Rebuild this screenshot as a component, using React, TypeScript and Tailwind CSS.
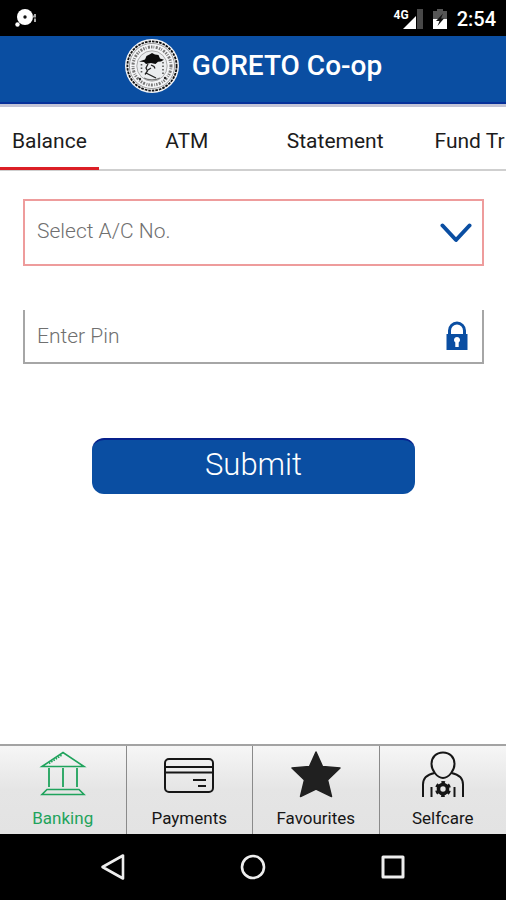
import { useState } from "react";
import type { ReactNode } from "react";

function Seal() {
  return (
    <svg viewBox="0 0 56 56" className="size-14 shrink-0" aria-hidden="true">
      <circle cx="28" cy="28" r="27" fill="#f4f5f7" />
      <circle cx="28" cy="28" r="24.6" fill="none" stroke="#111" strokeWidth="1.8" strokeDasharray="2.6 1" />
      <circle cx="28" cy="28" r="22.6" fill="none" stroke="#777" strokeWidth="0.7" />
      <circle cx="28" cy="28" r="19" fill="none" stroke="#777" strokeWidth="3" strokeDasharray="1.4 1.1 0.8 1.5 2 1.2" />
      <circle cx="28" cy="28" r="15.2" fill="#eceef0" stroke="#999" strokeWidth="0.8" />
      <path d="M15 23.500 21 21.500l1.500-3.500 3-1.500 2.500-1.500 3 1.500 3.500.5 1.500 3.500 4 1.200-3 1.800-3 .3-2.500 2.200-4.500-1-5 1-2-2Z" fill="#0c0c0c" />
      <path d="m24 26-2 4 1.500 3-2.500 3.500M27 27l3 1.500 1 2M22 35l4 2 6 3M24 32l3-2" fill="none" stroke="#222" strokeWidth="1.300" />
      <path d="M39 24v13M17.500 26v9" stroke="#555" strokeWidth="1.600" strokeDasharray="1.500 2" />
      <path d="M20 40c4 2.500 12 2.500 16 0" fill="none" stroke="#777" strokeWidth="1.200" />
      <circle cx="16" cy="41" r="1.200" fill="#222" />
      <circle cx="41" cy="40" r="1.200" fill="#222" />
    </svg>
  );
}

function StatusBar() {
  return (
    <div className="flex h-9 items-center justify-between bg-black pt-0.5 pr-2.5 pl-3.5 text-white">
      <svg viewBox="0 0 24 20" className="h-5 w-6" aria-hidden="true">
        <circle cx="11" cy="8" r="8" fill="#fff" />
        <circle cx="3.500" cy="15.500" r="2.200" fill="#fff" />
        <circle cx="11" cy="8" r="1.700" fill="#111" />
        <path d="M21 5v9M18.500 7.500h3" stroke="#aaa" strokeWidth="2" strokeDasharray="3.500 1" />
      </svg>
      <div className="flex items-center">
        <span className="-mr-2 self-start text-xs leading-3 font-bold">4G</span>
        <svg viewBox="0 0 22 20" className="h-5 w-[22px]" aria-hidden="true">
          <path d="M16 0h6v20h-6Z" fill="#484848" />
          <path d="M2 20 14 8v12Z" fill="#fff" />
          <path d="M14 8l1-1V20H14Z" fill="#fff" />
        </svg>
        <svg viewBox="0 0 14 20" className="mr-2.5 ml-2.5 h-5 w-3.5" aria-hidden="true">
          <path d="M4 0h6v2h4v8H0V2h4Z" fill="#555" />
          <path d="M0 10h14v10H0Z" fill="#fff" />
          <path d="M10 4.500 3 12h3.500L4.500 17 11 9.500H8Z" fill="#111" />
        </svg>
        <span className="text-xl leading-5 font-medium">2:54</span>
      </div>
    </div>
  );
}

const BankIcon = (
  <svg viewBox="0 0 48 48" className="size-12" fill="none" stroke="#1fa35c" strokeWidth="1.600" aria-hidden="true">
    <path d="M3 16.500 24 2.500l21 14Z" />
    <path d="M10 18v19M24 18v19M38 18v19" strokeWidth="1.800" />
    <path d="M8 39.500h32l5 5H3Z" />
    <path d="M10 13.500 23 5" strokeDasharray="1.500 1.200" />
  </svg>
);

const CardIcon = (
  <svg viewBox="0 0 50 48" className="h-12 w-[50px]" fill="none" stroke="#161616" strokeWidth="2" aria-hidden="true">
    <rect x="1" y="9" width="48" height="33" rx="4" />
    <path d="M1 17h48M1 22.500h48" />
    <path d="M29 30h13M34 36h8" strokeWidth="2.200" />
  </svg>
);

const StarIcon = (
  <svg viewBox="0 0 50 48" className="h-12 w-[50px]" fill="#202020" stroke="#202020" strokeWidth="1.500" strokeLinejoin="round" aria-hidden="true">
    <path d="M25 2l6.500 14.500L49 18 36.500 30l4 16.500L25 39 9.500 46.500 13.500 30 1 18l17.500-1.500Z" />
  </svg>
);

const SelfcareIcon = (
  <svg viewBox="0 0 48 48" className="size-12" fill="none" stroke="#161616" strokeWidth="2" aria-hidden="true">
    <path d="M24 2.500c7 0 11.500 5 11.500 11.500C35.500 20 30 28 24 28S12.500 20 12.500 14C12.500 7.500 17 2.500 24 2.500Z" />
    <path d="M15.500 23C8 24.500 4 28 4 34.500V47M32.500 23C40 24.500 44 28 44 34.500V47M12.500 37v10M35.500 37v10" />
    <circle cx="24" cy="39" r="4.500" strokeWidth="3.600" />
    <circle cx="24" cy="39" r="6.600" strokeWidth="2.800" strokeDasharray="3.500 3.411" strokeDashoffset="-1.700" />
  </svg>
);

const sections: { label: string; icon: ReactNode }[] = [
  { label: "Banking", icon: BankIcon },
  { label: "Payments", icon: CardIcon },
  { label: "Favourites", icon: StarIcon },
  { label: "Selfcare", icon: SelfcareIcon },
];

const tabs = ["Balance", "ATM", "Statement", "Fund Tr"];

export default function App() {
  const [tab, setTab] = useState("Balance");
  const [section, setSection] = useState("Banking");

  return (
    <div className="flex min-h-screen flex-col overflow-hidden bg-white font-[Roboto,sans-serif]">
      <StatusBar />
      <header className="border-b-3 border-[#c3c4d6] bg-[#0a4ea2]">
        <div className="flex h-17 items-start justify-center gap-3 border-b-2 border-[#06309a] pt-0.5">
          <Seal />
          <h1 className="pt-3 text-[28px] leading-8 font-medium text-white">GORETO Co-op</h1>
        </div>
      </header>

      <nav className="flex h-16 gap-[27px] overflow-hidden shadow-[inset_0_-2px_0_#cfcfcf]" aria-label="Services">
        {tabs.map((name) => (
          <button
            key={name}
            type="button"
            onClick={() => setTab(name)}
            className={`h-[63px] shrink-0 border-b-3 px-3 pt-2 text-[21px] leading-6 text-[#1c1c1c] ${
              name === "ATM" ? "min-w-[122px]" : ""
            } ${tab === name ? "border-[#dc1f26]" : "border-transparent"}`}
          >
            {name}
          </button>
        ))}
      </nav>

      <main className="flex flex-1 flex-col pt-7 pr-[22px] pl-[23px]">
        <div className="grid items-center border-2 border-[#ee9c9c]">
          <label htmlFor="account" className="sr-only">Account number</label>
          <select
            id="account"
            defaultValue=""
            className="col-start-1 row-start-1 h-[63px] w-full appearance-none bg-transparent px-3 pb-1 text-[21px] leading-7 font-light text-[#707070] outline-none"
          >
            <option value="">Select A/C No.</option>
          </select>
          <svg
            viewBox="0 0 32 20"
            className="pointer-events-none col-start-1 row-start-1 mr-2.5 h-5 w-8 justify-self-end"
            fill="none"
            stroke="#0a4ea2"
            strokeWidth="4"
            strokeLinecap="round"
            strokeLinejoin="round"
            aria-hidden="true"
          >
            <path d="M2.500 2.500 16 17 29.500 2.500" />
          </svg>
        </div>

        <div className="mt-11 flex items-center border-x-2 border-b-2 border-[#a6a6a6] pr-3.5">
          <label htmlFor="pin" className="sr-only">Pin</label>
          <input
            id="pin"
            type="password"
            placeholder="Enter Pin"
            className="h-[52px] min-w-0 flex-1 bg-transparent px-3 text-[21px] leading-7 font-light outline-none placeholder:text-[#707070]"
          />
          <svg viewBox="0 0 22 30" className="h-[30px] w-[22px]" aria-hidden="true">
            <path d="M3.500 14V9.500a7.500 7.500 0 0 1 15 0V14" fill="none" stroke="#0a4ea2" strokeWidth="3" />
            <path d="M.5 13h21v16H.5Z" fill="#0a4ea2" />
            <path d="M11 16a3 3 0 0 1 1.700 5.500V26H9.300v-4.500A3 3 0 0 1 11 16Z" fill="#fff" />
          </svg>
        </div>

        <button
          type="button"
          className="mx-auto mt-[74px] h-14 w-[70%] rounded-xl border-t-2 border-[#06208c] bg-[#0a4ea2] pb-1 text-[31px] leading-10 font-light text-white"
        >
          Submit
        </button>
      </main>

      <nav className="grid grid-cols-4 divide-x divide-[#8a8a8a] border-t-2 border-[#a3a3a3]" aria-label="Sections">
        {sections.map(({ label, icon }) => (
          <button
            key={label}
            type="button"
            onClick={() => setSection(label)}
            className={`flex h-22 flex-col items-center gap-2 bg-linear-to-b from-[#f6f6f6] via-[#e5e5e5] to-[#e3e3e3] pt-1 text-[17px] leading-6 ${
              section === label ? "text-[#1fa35c]" : "text-[#161616]"
            }`}
          >
            {icon}
            {label}
          </button>
        ))}
      </nav>

      <nav className="flex h-[66px] items-center justify-center gap-[114px] bg-black" aria-label="System">
        <button type="button" aria-label="Back">
          <svg viewBox="0 0 26 28" className="h-7 w-[26px]" fill="none" stroke="#eee" strokeWidth="2.600" strokeLinejoin="round">
            <path d="M23 2.500v23L2.500 14Z" />
          </svg>
        </button>
        <button type="button" aria-label="Home">
          <svg viewBox="0 0 26 26" className="size-[26px]" fill="none" stroke="#eee" strokeWidth="2.600">
            <circle cx="13" cy="13" r="11" />
          </svg>
        </button>
        <button type="button" aria-label="Recent apps">
          <svg viewBox="0 0 26 26" className="size-[26px]" fill="none" stroke="#eee" strokeWidth="3" strokeLinejoin="round">
            <rect x="3" y="3" width="20" height="20" />
          </svg>
        </button>
      </nav>
    </div>
  );
}
